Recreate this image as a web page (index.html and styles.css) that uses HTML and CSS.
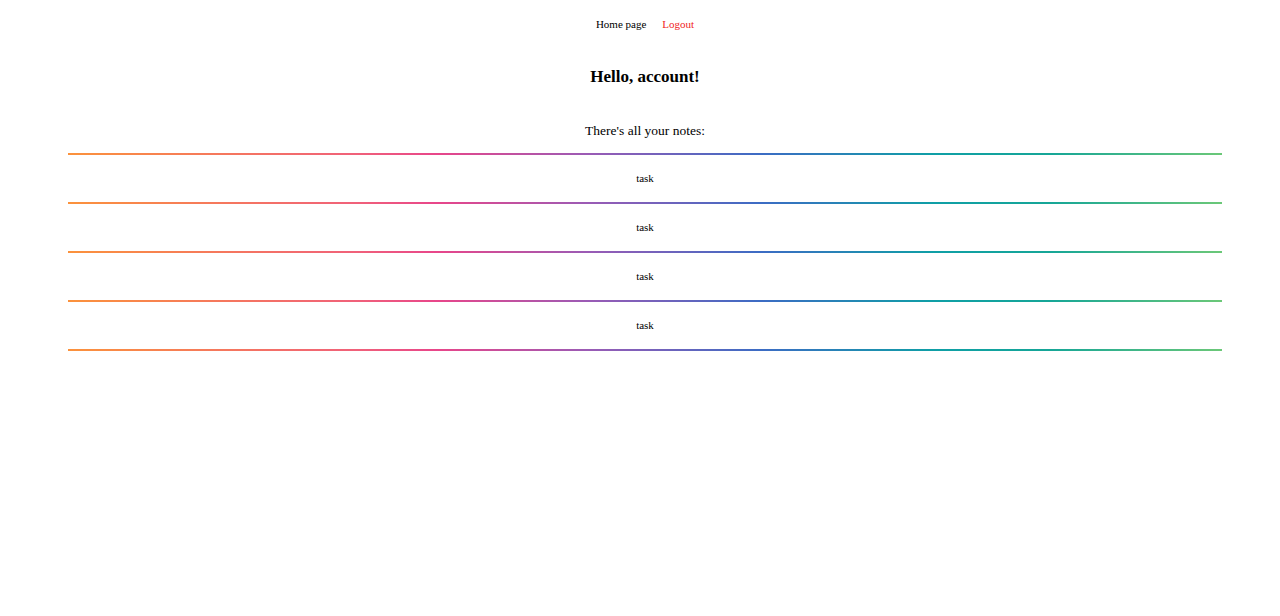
FILE: index.html
```html
<!DOCTYPE html>
<html lang="en">
<head>
<meta charset="utf-8">
<title>Notes</title>
<link rel="stylesheet" href="styles.css">
</head>
<body>
<nav class="nav">
  <a class="nav-link" href="#">Home page</a>
  <a class="nav-link nav-logout" href="#">Logout</a>
</nav>
<h3 class="greeting">Hello, account!</h3>
<p class="intro">There's all your notes:</p>
<ul class="notes">
  <li class="note">task</li>
  <li class="note">task</li>
  <li class="note">task</li>
  <li class="note">task</li>
</ul>
</body>
</html>
```
FILE: styles.css
```css
html, body {
  background: #ffffff;
}
body {
  margin: 8px;
  font-family: "Liberation Serif", "Times New Roman", serif;
  color: #000;
}
.nav {
  display: flex;
  justify-content: center;
  gap: 16px;
  padding: 9px 0 0 10px;
  font-size: 11px;
  line-height: 15px;
}
.nav-link {
  color: #000;
  text-decoration: none;
}
.nav-logout {
  color: #f01c24;
}
.greeting {
  margin: 34px 0 0;
  padding-left: 10px;
  text-align: center;
  font-size: 17px;
  line-height: 22px;
  font-weight: bold;
}
.intro {
  margin: 34px 0 0;
  padding-left: 10px;
  text-align: center;
  font-size: 13.5px;
  line-height: 18px;
}
.notes {
  list-style: none;
  margin: 13px 50px 0 60px;
  padding: 0;
  --grad: linear-gradient(to right, #fb923c 0%, #f0617a 25%, #e8468a 32%, #9b5bb5 45%, #3c6cc4 60%, #0f9fa6 75%, #16a697 85%, #6cc878 100%);
  border-top: 2px solid transparent;
  border-image: var(--grad) 1;
}
.note {
  height: 49px;
  box-sizing: border-box;
  padding-bottom: 2px;
  display: flex;
  align-items: center;
  justify-content: center;
  font-size: 11px;
  border-bottom: 2px solid transparent;
  border-image: var(--grad) 1;
}
```
